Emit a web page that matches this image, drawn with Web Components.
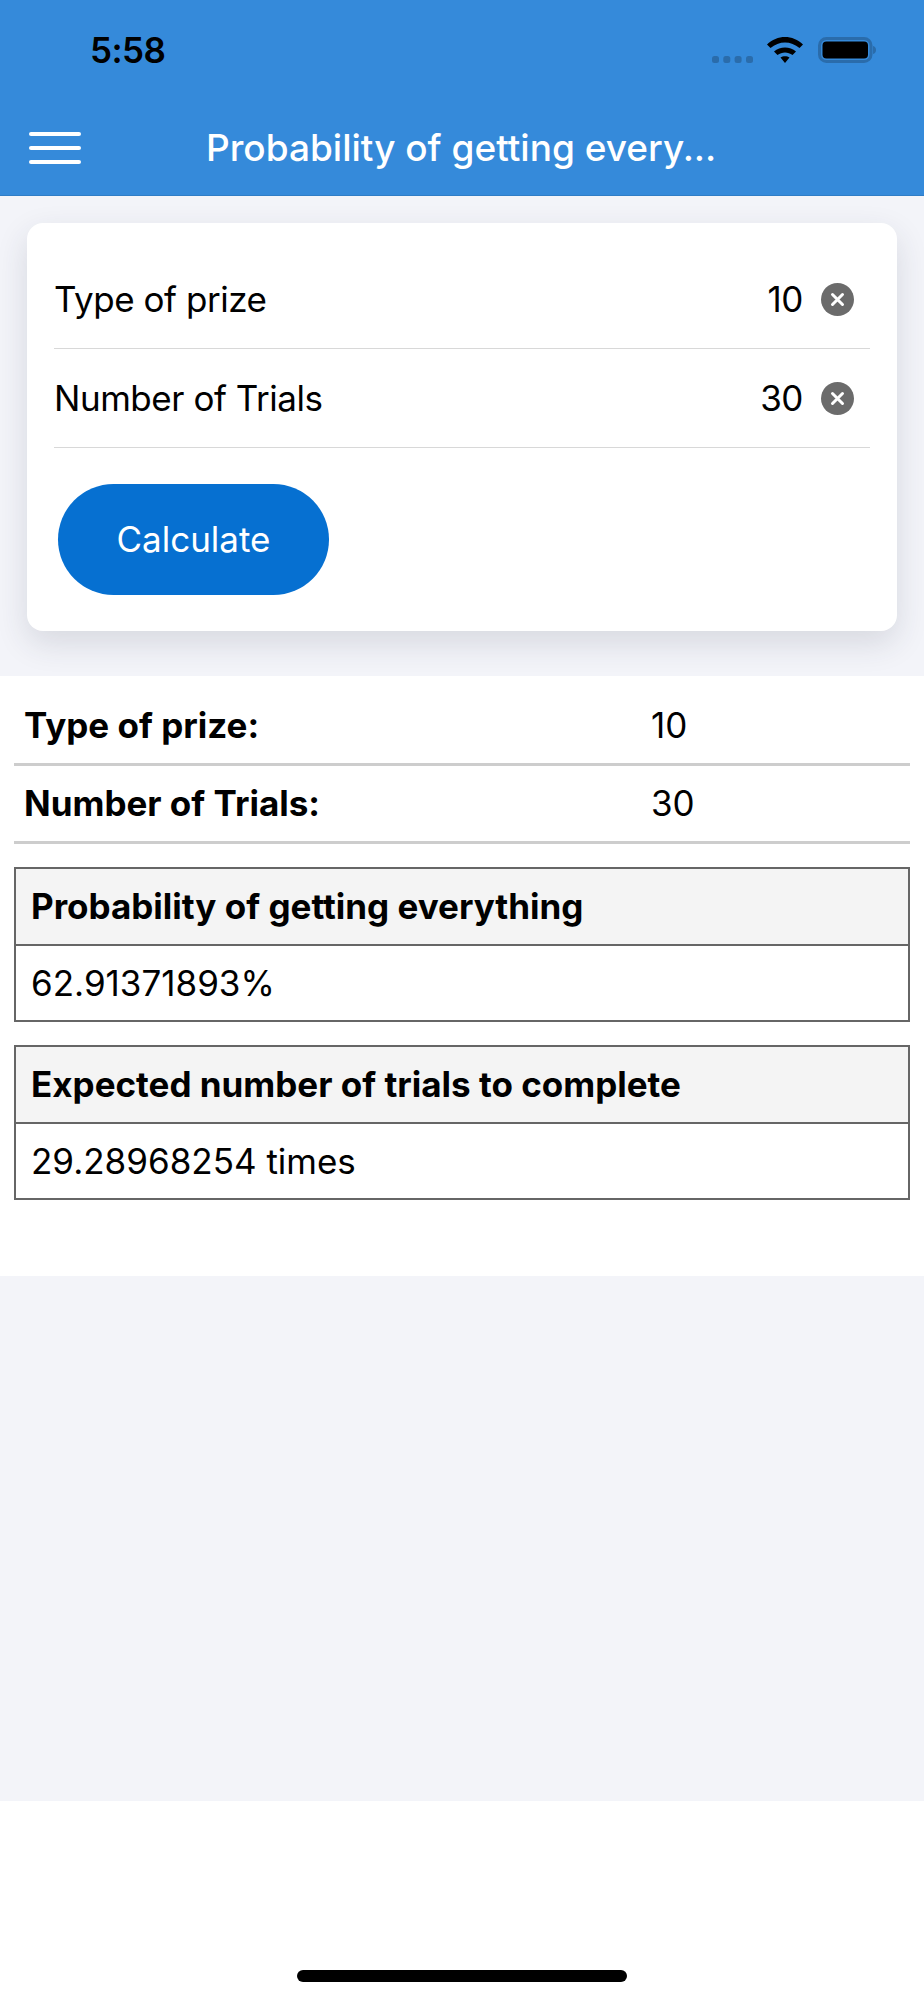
<!DOCTYPE html>
<html lang="en">
<head>
<meta charset="utf-8">
<title>Probability of getting everything</title>
<style>
    html, body { margin: 0; padding: 0; background: #fff; }
    body { width: 924px; height: 2000px; overflow: hidden; font-family: Inter, "Liberation Sans", sans-serif; color: #000; }
</style>
</head>
<body>
<app-page>
    <app-header slot="header" time="5:58">Probability of getting every...</app-header>
    <input-card slot="form">
        <input-row label="Type of prize" value="10"></input-row>
        <input-row label="Number of Trials" value="30"></input-row>
        <calc-button>Calculate</calc-button>
    </input-card>
    <result-list slot="results">
        <summary-row label="Type of prize:" value="10"></summary-row>
        <summary-row label="Number of Trials:" value="30"></summary-row>
        <result-box heading="Probability of getting everything">62.91371893%</result-box>
        <result-box heading="Expected number of trials to complete">29.28968254 times</result-box>
    </result-list>
</app-page>

<script>
class AppPage extends HTMLElement {
    constructor() {
        super();
        this.attachShadow({ mode: "open" }).innerHTML = `
            <style>
                :host { display: flex; flex-direction: column; height: 2000px; }
                .content { height: 1605px; background: #f3f4f9; display: flex; flex-direction: column; }
                .form { padding: 27px 27px 45px; }
                .footer { flex: 1; display: flex; justify-content: center; align-items: flex-end; padding-bottom: 18px; }
                .home { width: 330px; height: 12px; border-radius: 6px; background: #000; }
            </style>
            <slot name="header"></slot>
            <div class="content">
                <div class="form"><slot name="form"></slot></div>
                <slot name="results"></slot>
            </div>
            <div class="footer"><div class="home"></div></div>
        `;
    }
}

class AppHeader extends HTMLElement {
    constructor() {
        super();
        this.attachShadow({ mode: "open" }).innerHTML = `
            <style>
                :host { display: block; height: 196px; box-sizing: border-box; background: #358ada; border-bottom: 1px solid #2f7dc6; }
                .status { height: 100px; display: flex; align-items: center; padding: 0 0 0 90px; }
                .time { font: 600 35px/1 Inter, sans-serif; letter-spacing: -0.6px; color: #000; width: 620px; }
                .icons { display: flex; align-items: center; }
                .nav { display: flex; align-items: center; height: 95px; padding-left: 29px; }
                .title { margin-left: 125px; font: 500 37px/1 Inter, sans-serif; color: #fff; white-space: nowrap; }
                .menu { width: 52px; height: 32px; display: flex; flex-direction: column; justify-content: space-between; }
                .menu i { display: block; height: 4px; border-radius: 2px; background: #fff; }
            </style>
            <div class="status">
                <span class="time"></span>
                <div class="icons">
                    <svg width="176" height="30" viewBox="0 0 176 30">
                        <g fill="#2a6cab">
                            <rect x="2" y="21" width="7" height="7" rx="2.5"/>
                            <rect x="13.300" y="21" width="7" height="7" rx="2.5"/>
                            <rect x="24.600" y="21" width="7" height="7" rx="2.5"/>
                            <rect x="36" y="21" width="7" height="7" rx="2.5"/>
                        </g>
                        <path d="M57 9.500 C67 -0.500 83 -0.500 93 9.500 L89.500 13 C81 5.500 69 5.500 60.500 13 Z M64 16.500 C70 11 80 11 86 16.500 L82.500 20 C78 16.500 72 16.500 67.500 20 Z M70.500 22.500 C73 20.800 77 20.800 79.500 22.500 L75 28 Z" fill="#000"/>
                        <rect x="109.500" y="3.500" width="51.500" height="23" rx="7" fill="none" stroke="#2a6cab" stroke-width="3"/>
                        <rect x="112.500" y="6.500" width="45.500" height="17" rx="4" fill="#000"/>
                        <path d="M163 11 C165 11.500 166 13 166 15 C166 17 165 18.500 163 19 Z" fill="#2a6cab"/>
                    </svg>
                </div>
            </div>
            <div class="nav">
                <div class="menu"><i></i><i></i><i></i></div>
                <div class="title"><slot></slot></div>
            </div>
        `;
        this.shadowRoot.querySelector(".time").textContent = this.getAttribute("time");
    }
}

class InputCard extends HTMLElement {
    constructor() {
        super();
        this.attachShadow({ mode: "open" }).innerHTML = `
            <style>
                :host { display: block; box-sizing: border-box; height: 408px; padding: 27px 27px 0; background: #fff; border-radius: 16px; box-shadow: 0 12px 32px rgba(40, 50, 70, 0.14); }
            </style>
            <slot></slot>
        `;
    }
}

class InputRow extends HTMLElement {
    constructor() {
        super();
        this.attachShadow({ mode: "open" }).innerHTML = `
            <style>
                :host { display: flex; align-items: center; height: 99px; box-sizing: border-box; border-bottom: 1px solid #d8d8d8; font: 400 35px/1 Inter, sans-serif; letter-spacing: -0.45px; color: #000; }
                .label { flex: 1; }
                .clear { margin: 0 16px 0 18px; }
            </style>
            <span class="label"></span>
            <span class="value"></span>
            <svg class="clear" width="33" height="33" viewBox="0 0 33 33">
                <circle cx="16.500" cy="16.500" r="16.500" fill="#6b6b6b"/>
                <path d="M11.500 11.500 L21.500 21.500 M21.500 11.500 L11.500 21.500" stroke="#fff" stroke-width="3" stroke-linecap="round"/>
            </svg>
        `;
        this.shadowRoot.querySelector(".label").textContent = this.getAttribute("label");
        this.shadowRoot.querySelector(".value").textContent = this.getAttribute("value");
    }
}

class CalcButton extends HTMLElement {
    constructor() {
        super();
        this.attachShadow({ mode: "open" }).innerHTML = `
            <style>
                :host { display: flex; align-items: center; justify-content: center; width: 271px; height: 111px; margin: 36px 0 0 4px; border-radius: 56px; background: #0670d1; color: #fff; font: 400 35px/1 Inter, sans-serif; }
            </style>
            <slot></slot>
        `;
    }
}

class ResultList extends HTMLElement {
    constructor() {
        super();
        this.attachShadow({ mode: "open" }).innerHTML = `
            <style>
                :host { display: block; height: 600px; box-sizing: border-box; padding: 12px 14px 0; background: #fff; }
            </style>
            <slot></slot>
        `;
    }
}

class SummaryRow extends HTMLElement {
    constructor() {
        super();
        this.attachShadow({ mode: "open" }).innerHTML = `
            <style>
                :host { display: flex; align-items: center; height: 78px; box-sizing: border-box; padding-left: 10px; border-bottom: 3px solid #cdcdcd; color: #000; font: 400 35px/1 Inter, sans-serif; }
                .label { width: 627px; font-weight: 700; }
            </style>
            <span class="label"></span>
            <span class="value"></span>
        `;
        this.shadowRoot.querySelector(".label").textContent = this.getAttribute("label");
        this.shadowRoot.querySelector(".value").textContent = this.getAttribute("value");
    }
}

class ResultBox extends HTMLElement {
    constructor() {
        super();
        this.attachShadow({ mode: "open" }).innerHTML = `
            <style>
                :host { display: block; margin-top: 23px; box-sizing: border-box; height: 155px; border: 2px solid #666; color: #000; font: 400 35px/1 Inter, sans-serif; }
                .head, .body { display: flex; align-items: center; height: 75px; padding-left: 15px; }
                .head { background: #f4f4f4; font-weight: 700; border-bottom: 2px solid #666; }
            </style>
            <div class="head"></div>
            <div class="body"><slot></slot></div>
        `;
        this.shadowRoot.querySelector(".head").textContent = this.getAttribute("heading");
    }
}

customElements.define("app-page", AppPage);
customElements.define("app-header", AppHeader);
customElements.define("input-card", InputCard);
customElements.define("input-row", InputRow);
customElements.define("calc-button", CalcButton);
customElements.define("result-list", ResultList);
customElements.define("summary-row", SummaryRow);
customElements.define("result-box", ResultBox);
</script>
</body>
</html>
